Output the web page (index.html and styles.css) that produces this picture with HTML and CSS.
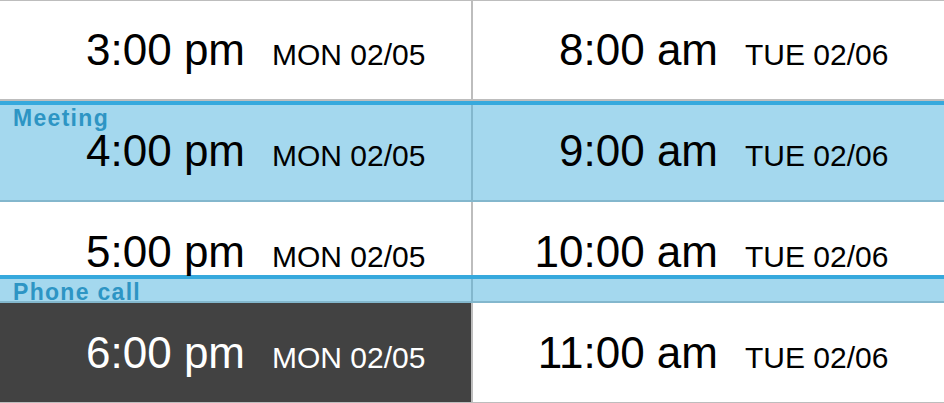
FILE: index.html
```html
<!DOCTYPE html>
<html lang="en">
<head>
<meta charset="utf-8">
<title>Schedule</title>
<link rel="stylesheet" href="styles.css">
</head>
<body>
<div class="calendar">
  <div class="row">
    <div class="cell cell-left"><span class="time">3:00 pm</span><span class="date">MON 02/05</span></div>
    <div class="cell"><span class="time">8:00 am</span><span class="date">TUE 02/06</span></div>
  </div>
  <div class="row">
    <div class="event event-meeting"><span class="event-label">Meeting</span></div>
    <div class="cell cell-left"><span class="time">4:00 pm</span><span class="date">MON 02/05</span></div>
    <div class="cell"><span class="time">9:00 am</span><span class="date">TUE 02/06</span></div>
  </div>
  <div class="row">
    <div class="event event-call"><span class="event-label">Phone call</span></div>
    <div class="cell cell-left"><span class="time">5:00 pm</span><span class="date">MON 02/05</span></div>
    <div class="cell"><span class="time">10:00 am</span><span class="date">TUE 02/06</span></div>
  </div>
  <div class="row">
    <div class="cell cell-left cell-selected"><span class="time">6:00 pm</span><span class="date">MON 02/05</span></div>
    <div class="cell"><span class="time">11:00 am</span><span class="date">TUE 02/06</span></div>
  </div>
</div>
</body>
</html>
```
FILE: styles.css
```css
html, body {
  margin: 0;
  padding: 0;
  overflow: hidden;
  background: #ffffff;
  font-family: "Liberation Sans", Arial, sans-serif;
}

.calendar {
  width: 944px;
  border-top: 1px solid #bdbdbd;
}

.row {
  position: relative;
  display: grid;
  grid-template-columns: 473px 1fr;
  height: 99px;
  border-bottom: 2px solid #bdbdbd;
}

.row:first-child {
  height: 98px;
}

.cell {
  display: grid;
  grid-template-columns: 245px auto;
  column-gap: 27px;
  align-items: baseline;
  align-content: center;
  color: #000000;
}

.cell-left {
  border-right: 2px solid #bdbdbd;
}

.cell-selected {
  background: #424242;
  color: #ffffff;
}

.time {
  position: relative;
  z-index: 1;
  justify-self: end;
  font-size: 44px;
  line-height: 44px;
  white-space: nowrap;
}

.date {
  position: relative;
  z-index: 1;
  font-size: 30px;
  line-height: 30px;
  white-space: nowrap;
}

.event {
  position: absolute;
  left: 0;
  right: 0;
  bottom: -2px;
  z-index: 0;
  background: rgba(73, 177, 221, 0.5);
  border-top: 4px solid #36a9dd;
  padding: 2px 0 0 13px;
}

.event-meeting {
  top: 0;
}

.event-call {
  top: 73px;
}

.event-label {
  display: block;
  font-size: 23px;
  line-height: 23px;
  font-weight: 700;
  letter-spacing: 1.3px;
  color: #2d95c4;
}
```
